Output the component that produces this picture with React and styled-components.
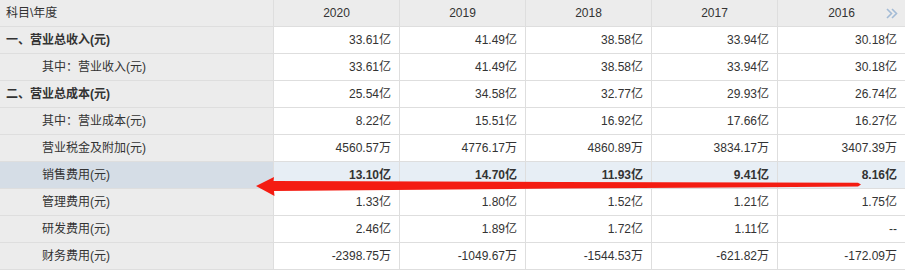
import React from "react";
import styled, { createGlobalStyle } from "styled-components";

const Global = createGlobalStyle`
  html, body { margin: 0; padding: 0; background: #fff; }
  body { font-family: "Liberation Sans", "Noto Sans CJK SC", sans-serif; }
`;

const Wrap = styled.div`
  position: relative;
  width: 905px;
  height: 270px;
  overflow: hidden;
`;

const Grid = styled.div`
  display: grid;
  grid-template-columns: 273px repeat(4, 125px) 1fr;
  grid-auto-rows: 26px;
  gap: 1px;
  padding-bottom: 1px;
  background: #dedede;
  font-size: 12px;
  color: #333;
`;

const HeadCell = styled.div`
  background: #ececec;
  line-height: 26px;
  text-align: ${(p) => (p.$left ? "left" : "center")};
  padding-left: ${(p) => (p.$left ? "6px" : "0")};
  position: relative;
  white-space: nowrap;
`;

const LabelCell = styled.div`
  background: ${(p) => (p.$hl ? "#d5dde6" : "#ececec")};
  line-height: 26px;
  padding-left: ${(p) => (p.$indent ? "42px" : "6px")};
  font-weight: ${(p) => (p.$bold ? 700 : 400)};
  white-space: nowrap;
`;

const ValueCell = styled.div`
  background: ${(p) => (p.$hl ? "#e7eef5" : "#fff")};
  line-height: 26px;
  text-align: right;
  padding-right: 8px;
  font-weight: ${(p) => (p.$bold ? 700 : 400)};
  white-space: nowrap;
`;

const More = styled.svg`
  position: absolute;
  right: 7px;
  top: 8px;
`;

const Arrow = styled.svg`
  position: absolute;
  left: 0;
  top: 0;
  pointer-events: none;
`;

const years = ["2020", "2019", "2018", "2017", "2016"];

const rows = [
  { label: "一、营业总收入(元)", bold: true, v: ["33.61亿", "41.49亿", "38.58亿", "33.94亿", "30.18亿"] },
  { label: "其中：营业收入(元)", indent: true, v: ["33.61亿", "41.49亿", "38.58亿", "33.94亿", "30.18亿"] },
  { label: "二、营业总成本(元)", bold: true, v: ["25.54亿", "34.58亿", "32.77亿", "29.93亿", "26.74亿"] },
  { label: "其中：营业成本(元)", indent: true, v: ["8.22亿", "15.51亿", "16.92亿", "17.66亿", "16.27亿"] },
  { label: "营业税金及附加(元)", indent: true, v: ["4560.57万", "4776.17万", "4860.89万", "3834.17万", "3407.39万"] },
  { label: "销售费用(元)", indent: true, hl: true, v: ["13.10亿", "14.70亿", "11.93亿", "9.41亿", "8.16亿"] },
  { label: "管理费用(元)", indent: true, v: ["1.33亿", "1.80亿", "1.52亿", "1.21亿", "1.75亿"] },
  { label: "研发费用(元)", indent: true, v: ["2.46亿", "1.89亿", "1.72亿", "1.11亿", "--"] },
  { label: "财务费用(元)", indent: true, v: ["-2398.75万", "-1049.67万", "-1544.53万", "-621.82万", "-172.09万"] },
];

export default function App() {
  return (
    <Wrap>
      <Global />
      <Grid>
        <HeadCell $left>科目\年度</HeadCell>
        {years.map((y, i) => (
          <HeadCell key={y}>
            {y}
            {i === years.length - 1 && (
              <More width="12" height="11" viewBox="0 0 12 11">
                <polyline points="1,1 5.5,5.5 1,10" fill="none" stroke="#a3bbd6" strokeWidth="1.6" />
                <polyline points="6,1 10.5,5.5 6,10" fill="none" stroke="#a3bbd6" strokeWidth="1.6" />
              </More>
            )}
          </HeadCell>
        ))}
        {rows.map((r) => (
          <React.Fragment key={r.label}>
            <LabelCell $bold={r.bold} $indent={r.indent} $hl={r.hl}>
              {r.label}
            </LabelCell>
            {r.v.map((v, i) => (
              <ValueCell key={i} $hl={r.hl} $bold={r.hl}>
                {v}
              </ValueCell>
            ))}
          </React.Fragment>
        ))}
      </Grid>
      <Arrow width="905" height="270" viewBox="0 0 905 270">
        <path
          d="M256,186 L274,177 L273.5,181 L560,182 L858,182.8 L861,184.5 L858,186.5 L560,188.5 L274,191 L274.5,196 Z"
          fill="#f41c12"
        />
      </Arrow>
    </Wrap>
  );
}
